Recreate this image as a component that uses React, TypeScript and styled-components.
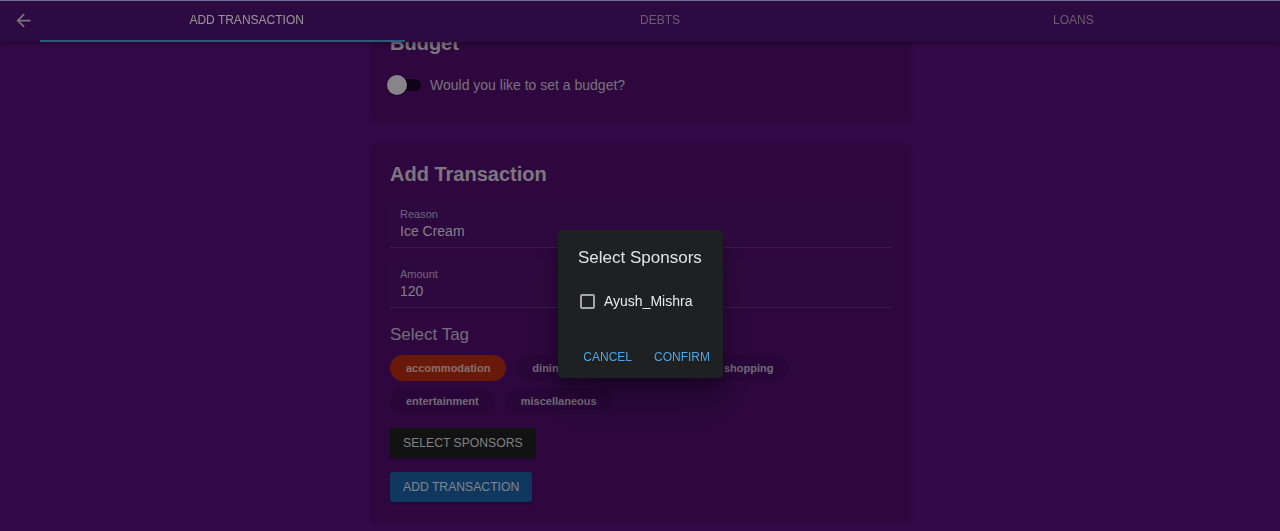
import React, {useState} from 'react';
import styled, {createGlobalStyle} from 'styled-components';

const GlobalStyle = createGlobalStyle`
  body {
    margin: 0;
    background: #5a107c;
    font-family: 'Liberation Sans', Arial, sans-serif;
    color: #fff;
  }
`;

const AppBar = styled.header`
  position: fixed;
  top: 0;
  left: 0;
  right: 0;
  height: 41px;
  display: flex;
  align-items: stretch;
  background: #4f1270;
  border-top: 1px solid #b9c6ff;
  box-shadow: 0 2px 4px rgba(0, 0, 0, 0.35);
  z-index: 10;
`;

const BackButton = styled.button`
  width: 40px;
  flex: none;
  display: flex;
  align-items: center;
  justify-content: center;
  background: none;
  border: 0;
  padding: 0 0 2px 6px;
  color: rgba(255, 255, 255, 0.75);
  cursor: pointer;
`;

const Tabs = styled.nav`
  flex: 1;
  display: flex;
  position: relative;
`;

const Tab = styled.button<{$active?: boolean}>`
  flex: 1;
  background: none;
  border: 0;
  font-family: inherit;
  font-size: 12px;
  text-transform: uppercase;
  padding: 0 0 3px;
  color: ${({$active}) => ($active ? '#fff' : 'rgba(255, 255, 255, 0.58)')};
  cursor: pointer;
`;

const Indicator = styled.span`
  position: absolute;
  left: 0;
  bottom: 0;
  height: 2px;
  background: #4a9ad6;
`;

const Main = styled.main`
  display: flex;
  flex-direction: column;
  align-items: center;
  gap: 21px;
  padding: 12px 0 40px 2px;
`;

const Card = styled.section<{$bottom?: number}>`
  width: 540px;
  box-sizing: border-box;
  padding: 19px 19px ${({$bottom = 21}) => $bottom}px 19px;
  background: rgba(0, 0, 0, 0.13);
  border-radius: 6px;
  box-shadow: 0 1px 3px rgba(0, 0, 0, 0.15);
`;

const CardTitle = styled.h2`
  margin: 0;
  font-size: 20px;
  line-height: 24px;
  font-weight: 700;
  color: rgba(255, 255, 255, 0.8);
`;

const ToggleRow = styled.label`
  display: flex;
  align-items: center;
  gap: 9px;
  height: 38px;
  margin: 11px 0 0 -3px;
  font-size: 14px;
  color: rgba(255, 255, 255, 0.75);
`;

const SwitchTrack = styled.span`
  position: relative;
  width: 34px;
  height: 12px;
  border-radius: 6px;
  background: rgba(0, 0, 0, 0.6);
`;

const SwitchThumb = styled.span<{$on: boolean}>`
  position: absolute;
  top: -4px;
  left: ${({$on}) => ($on ? '14px' : '0')};
  width: 20px;
  height: 20px;
  border-radius: 50%;
  background: #ebe6ee;
  box-shadow: 0 1px 2px rgba(0, 0, 0, 0.4);
`;

const Fields = styled.div`
  display: flex;
  flex-direction: column;
  gap: 12px;
  margin-top: 14px;
  width: 502px;
`;

const Field = styled.div`
  display: flex;
  flex-direction: column;
  gap: 2px;
  padding: 8px 10px 7px;
  background: rgba(255, 255, 255, 0.015);
  border-bottom: 1px solid rgba(255, 255, 255, 0.14);
  border-radius: 4px 4px 0 0;
`;

const FieldLabel = styled.span`
  font-size: 11px;
  line-height: 13px;
  color: rgba(255, 255, 255, 0.66);
`;

const FieldValue = styled.span`
  font-size: 14px;
  line-height: 17px;
  color: rgba(255, 255, 255, 0.85);
`;

const SectionLabel = styled.div`
  margin-top: 17px;
  font-size: 17px;
  line-height: 20px;
  color: rgba(255, 255, 255, 0.72);
`;

const ChipList = styled.div`
  display: flex;
  flex-wrap: wrap;
  gap: 7px 10px;
  margin-top: 10px;
  width: 410px;
`;

const Chip = styled.span<{$selected?: boolean}>`
  display: inline-flex;
  align-items: center;
  height: 26px;
  padding: 0 16px;
  border-radius: 13px;
  font-size: 11px;
  font-weight: 700;
  color: rgba(255, 255, 255, 0.7);
  background: ${({$selected}) => ($selected ? '#b52b12' : 'rgba(0, 0, 0, 0.09)')};
`;

const ActionButton = styled.button<{$variant: 'dark' | 'primary'}>`
  display: block;
  height: 30px;
  padding: 0 13px;
  margin-top: 14px;
  border: 0;
  border-radius: 3px;
  font-family: inherit;
  font-size: 12.2px;
  text-transform: uppercase;
  color: rgba(255, 255, 255, 0.85);
  background: ${({$variant}) => ($variant === 'primary' ? '#1a5fa4' : '#1f1f1f')};
  box-shadow: 0 2px 2px rgba(0, 0, 0, 0.2);
  cursor: pointer;
`;

const Backdrop = styled.div`
  position: fixed;
  inset: 0;
  background: rgba(0, 0, 0, 0.42);
  display: flex;
  justify-content: center;
  align-items: flex-start;
  padding-top: 230px;
  padding-left: 1px;
  z-index: 20;
`;

const Dialog = styled.div`
  width: 165px;
  height: 148px;
  box-sizing: border-box;
  display: flex;
  flex-direction: column;
  background: #1f2022;
  border-radius: 4px;
  box-shadow: 0 11px 15px rgba(0, 0, 0, 0.3), 0 24px 38px rgba(0, 0, 0, 0.2);
`;

const DialogTitle = styled.h3`
  margin: 0;
  padding: 17px 20px 0;
  font-size: 17px;
  line-height: 22px;
  font-weight: 400;
  color: rgba(255, 255, 255, 0.87);
`;

const OptionRow = styled.label`
  display: flex;
  align-items: center;
  gap: 9px;
  margin: 24px 0 0 22px;
  font-size: 14px;
  color: rgba(255, 255, 255, 0.9);
`;

const CheckBox = styled.span<{$checked: boolean}>`
  width: 11px;
  height: 11px;
  border: 2px solid rgba(255, 255, 255, 0.6);
  border-radius: 2px;
  background: ${({$checked}) => ($checked ? '#4fa3e3' : 'transparent')};
`;

const DialogActions = styled.div`
  margin-top: auto;
  display: flex;
  justify-content: flex-end;
  gap: 6px;
  padding: 0 5px 6px;
`;

const TextButton = styled.button`
  height: 30px;
  min-width: 64px;
  padding: 0 8px;
  background: none;
  border: 0;
  font-family: inherit;
  font-size: 12px;
  text-transform: uppercase;
  color: #4fa3e3;
  cursor: pointer;
`;

const tags = [
  'accommodation',
  'dining',
  'transportation',
  'shopping',
  'entertainment',
  'miscellaneous',
];

function ArrowBack() {
  return (
    <svg width="21" height="21" viewBox="0 0 24 24" fill="currentColor">
      <path d="M20 11H7.83l5.59-5.59L12 4l-8 8 8 8 1.41-1.41L7.83 13H20v-2z" />
    </svg>
  );
}

export default function App() {
  const [budgetOn, setBudgetOn] = useState(false);
  const [checked, setChecked] = useState(false);

  return (
    <>
      <GlobalStyle />
      <AppBar>
        <BackButton aria-label="back">
          <ArrowBack />
        </BackButton>
        <Tabs>
          <Tab $active>Add Transaction</Tab>
          <Tab>Debts</Tab>
          <Tab>Loans</Tab>
          <Indicator style={{width: 365}} />
        </Tabs>
      </AppBar>

      <Main>
        <Card $bottom={18}>
          <CardTitle>Budget</CardTitle>
          <ToggleRow onClick={() => setBudgetOn(v => !v)}>
            <SwitchTrack>
              <SwitchThumb $on={budgetOn} />
            </SwitchTrack>
            Would you like to set a budget?
          </ToggleRow>
        </Card>

        <Card>
          <CardTitle>Add Transaction</CardTitle>
          <Fields>
            <Field>
              <FieldLabel>Reason</FieldLabel>
              <FieldValue>Ice Cream</FieldValue>
            </Field>
            <Field>
              <FieldLabel>Amount</FieldLabel>
              <FieldValue>120</FieldValue>
            </Field>
          </Fields>
          <SectionLabel>Select Tag</SectionLabel>
          <ChipList>
            {tags.map(tag => (
              <Chip key={tag} $selected={tag === 'accommodation'}>
                {tag}
              </Chip>
            ))}
          </ChipList>
          <ActionButton $variant="dark">Select Sponsors</ActionButton>
          <ActionButton $variant="primary">Add Transaction</ActionButton>
        </Card>
      </Main>

      <Backdrop>
        <Dialog role="dialog">
          <DialogTitle>Select Sponsors</DialogTitle>
          <OptionRow onClick={() => setChecked(v => !v)}>
            <CheckBox $checked={checked} />
            Ayush_Mishra
          </OptionRow>
          <DialogActions>
            <TextButton>Cancel</TextButton>
            <TextButton>Confirm</TextButton>
          </DialogActions>
        </Dialog>
      </Backdrop>
    </>
  );
}
